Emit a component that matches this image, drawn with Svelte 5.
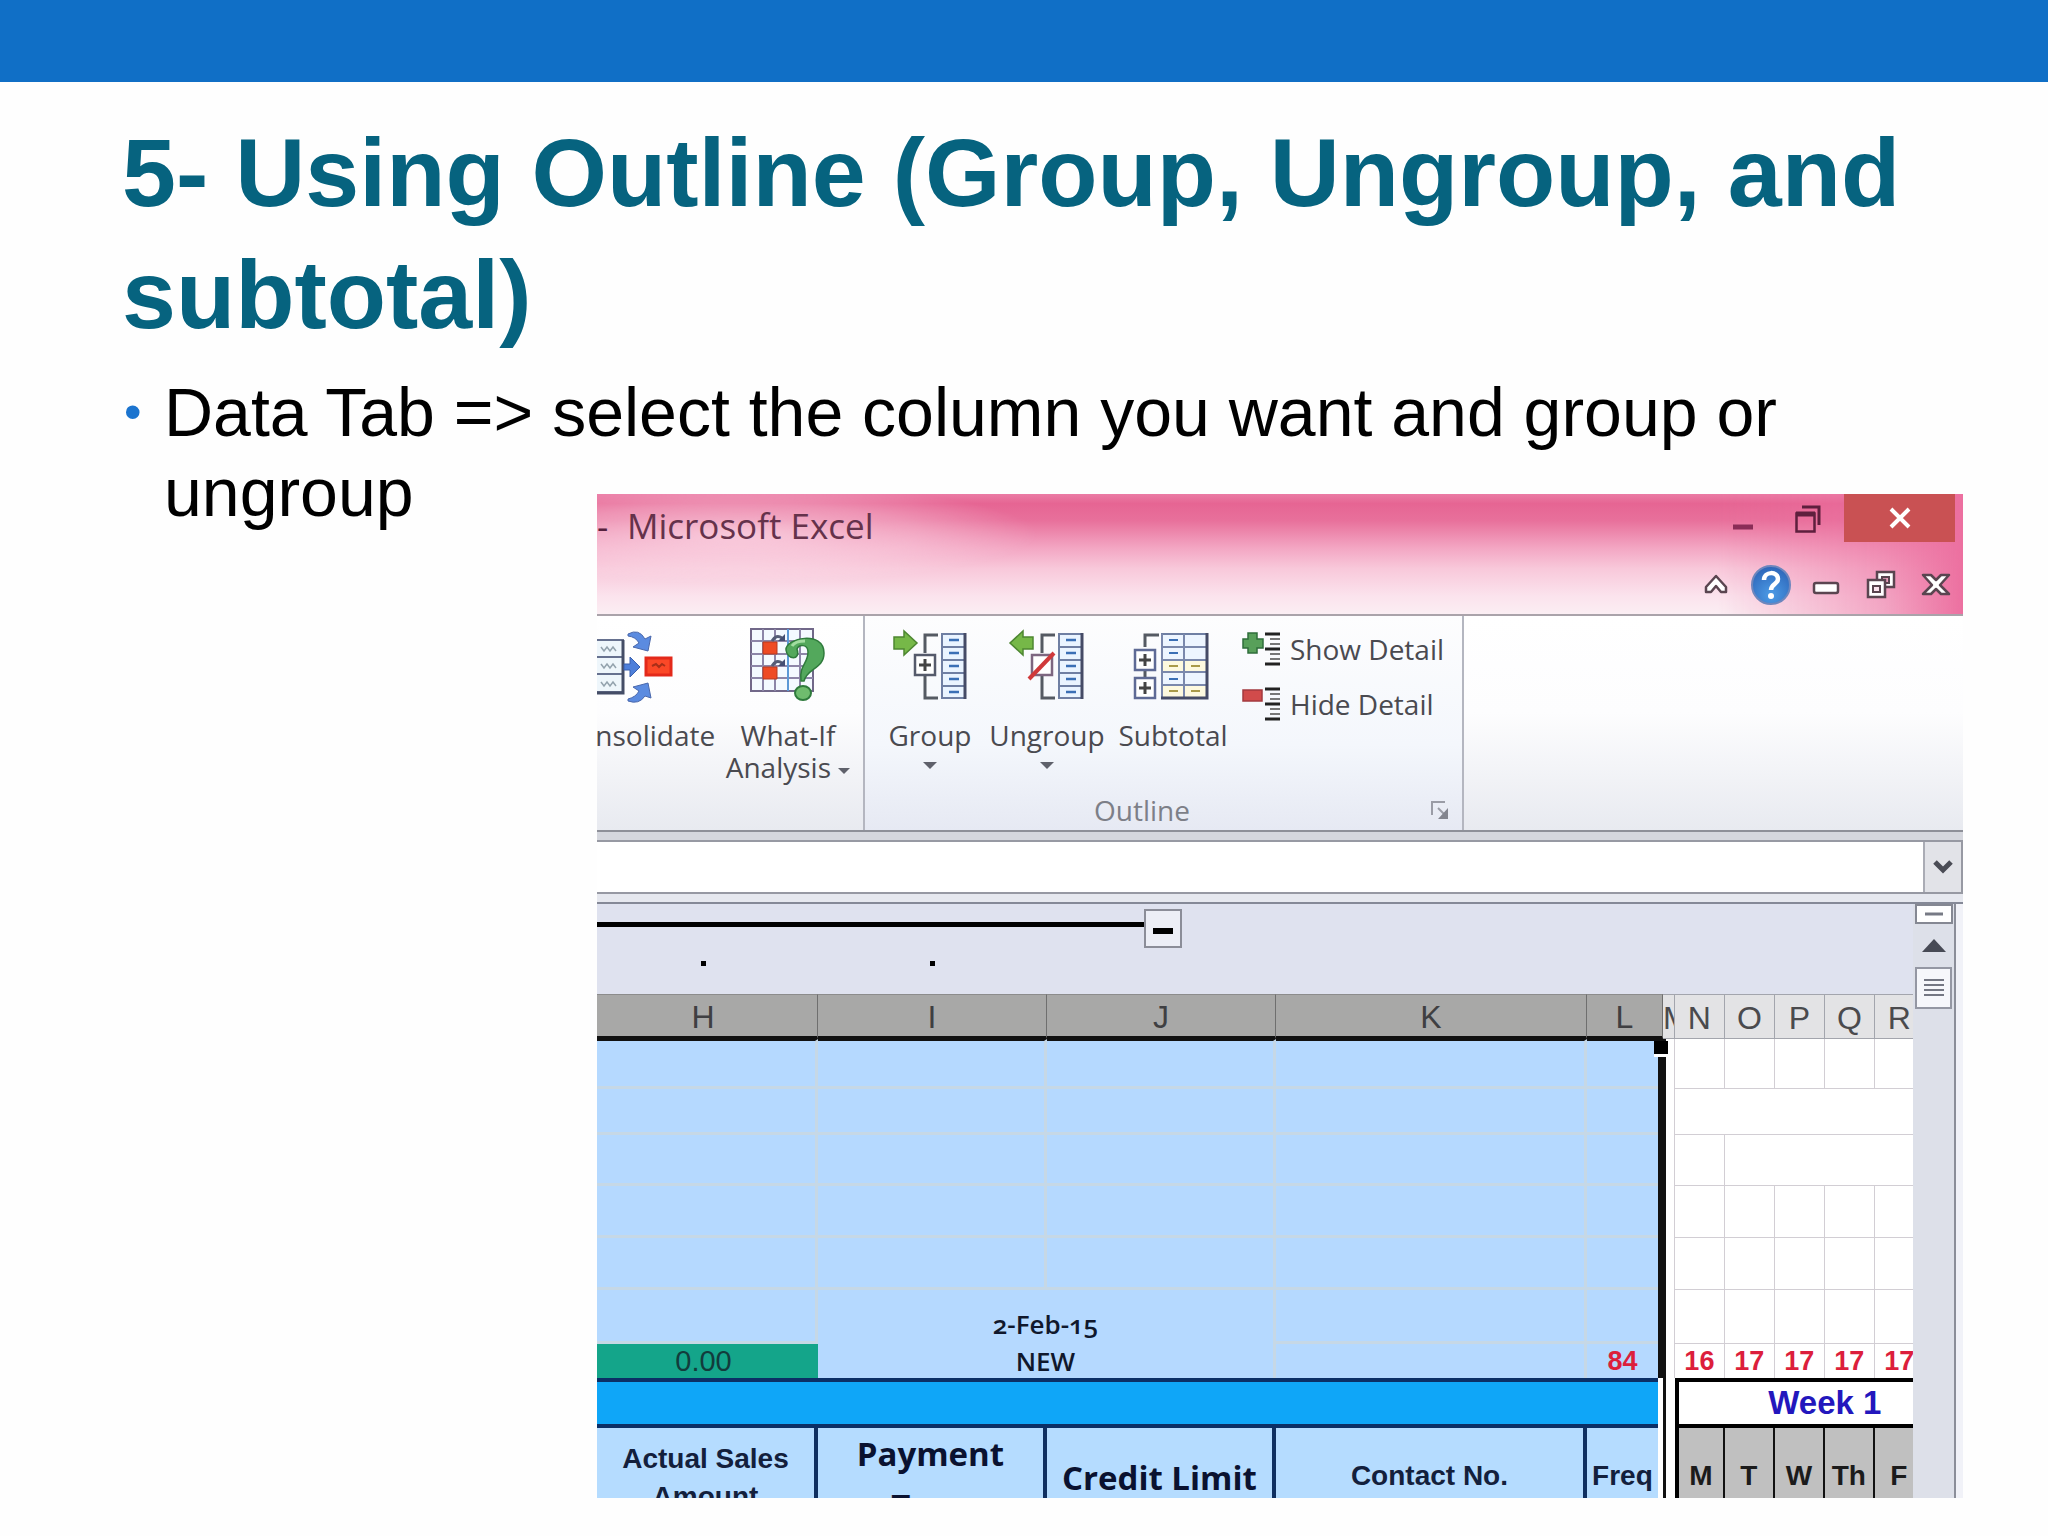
<script>
  const columns = [
    { name: 'H', size: 221 },
    { name: 'I', size: 229 },
    { name: 'J', size: 229 },
    { name: 'K', size: 311 },
    { name: 'L', size: 76 },
    { name: 'M', size: 12 },
    { name: 'N', size: 50 },
    { name: 'O', size: 50 },
    { name: 'P', size: 50 },
    { name: 'Q', size: 50 },
    { name: 'R', size: 50 },
    { name: 'S', size: 50 }
  ];
  const total = columns.reduce((sum, c) => sum + c.size, 0);
  const selected = ['H', 'I', 'J', 'K', 'L'];
  const weekCols = ['N', 'O', 'P', 'Q', 'R', 'S'];
  const days = ['M', 'T', 'W', 'Th', 'F', 'S'];
  const counts = ['16', '17', '17', '17', '17', '17'];
  const emptyRows = [
    { cls: 'r50', right: [1, 1, 1, 1, 1, 1] },
    { cls: 'r46', right: [6] },
    { cls: 'r51', right: [1, 5] },
    { cls: 'r52', right: [1, 1, 1, 1, 1, 1] },
    { cls: 'r52', right: [1, 1, 1, 1, 1, 1] }
  ];
  const bars = [0, 1, 2, 3, 4];
</script>

{#snippet cells(x)}
  <rect x={x} y="8" width="23" height="64" fill="#eaf4ff" stroke="#6f7fa3" stroke-width="2" />
  {#each bars as i}
    <path d="M{x} {8 + i * 13}h23" stroke="#6f7fa3" stroke-width="2" />
    <path d="M{x + 7} {14 + i * 13}h10" stroke="#3a6fb5" stroke-width="2.500" />
  {/each}
  <path d="M{x + 23} 7v66" stroke="#454b66" stroke-width="3" />
{/snippet}

{#snippet ruler()}
  <path d="M23 3h15M23 18h15M23 33h15" stroke="#222" stroke-width="3" />
  <path d="M28 8h10M28 13h10M28 23h10M28 28h10" stroke="#777" stroke-width="2" />
{/snippet}

<main class="slide">
  <div class="band"></div>
  <h1>5- Using Outline (Group, Ungroup, and subtotal)</h1>

  <div class="content">
    <ul>
      <li>Data Tab =&gt; select the column you want and group or ungroup</li>
    </ul>

    <section class="excel" aria-label="Microsoft Excel">
      <div class="titlebar">
        <div class="bar-top">
          <span class="dash">-</span>
          <span class="app-name">Microsoft Excel</span>
          <div class="window-buttons">
            <button class="w-min" aria-label="Minimize">
              <svg width="22" height="40" viewBox="0 0 22 40"><path d="M1 29h20" stroke="#8a2d57" stroke-width="5" /></svg>
            </button>
            <button class="w-max" aria-label="Restore">
              <svg width="28" height="40" viewBox="0 0 28 40"><path d="M8 9h17v18" fill="none" stroke="#5e1f3d" stroke-width="3" /><path d="M2.500 15.500h18v18h-18z" fill="none" stroke="#5e1f3d" stroke-width="2.500" /><path d="M2 16h19" stroke="#5e1f3d" stroke-width="5" /></svg>
            </button>
            <button class="w-close" aria-label="Close">
              <svg width="24" height="22" viewBox="0 0 24 22"><path d="M3 2l18 18M21 2L3 20" stroke="#fff" stroke-width="4" /></svg>
            </button>
          </div>
        </div>
        <div class="bar-bottom">
          <button aria-label="Collapse ribbon">
            <svg width="26" height="24" viewBox="0 0 26 24"><path d="M13 3L23 14v5h-5l-5-6-5 6H3v-5z" fill="#fff" stroke="#5a4550" stroke-width="2.500" stroke-linejoin="round" /></svg>
          </button>
          <button aria-label="Help">
            <svg width="42" height="42" viewBox="0 0 42 42">
              <defs><radialGradient id="help" cx=".5" cy=".75" r=".8"><stop offset="0" stop-color="#4b9be6" /><stop offset="1" stop-color="#2b61b5" /></radialGradient></defs>
              <circle cx="21" cy="21" r="19" fill="url(#help)" stroke="#6d86bd" stroke-width="2" />
              <path d="M14 16c0-9 14-9 14-1 0 5-7 5-7 11" fill="none" stroke="#fff" stroke-width="4.500" /><circle cx="21" cy="32" r="3" fill="#fff" />
            </svg>
          </button>
          <button aria-label="Minimize workbook">
            <svg width="28" height="28" viewBox="0 0 28 28"><rect x="2" y="12" width="24" height="10" rx="2" fill="#fff" stroke="#5a4550" stroke-width="2.500" /></svg>
          </button>
          <button aria-label="Restore workbook">
            <svg width="32" height="32" viewBox="0 0 32 32"><path d="M12 3h17v15H12z" fill="#fff" stroke="#5a4550" stroke-width="2.500" /><path d="M17 8h7v6h-7z" fill="#e99dbb" stroke="#5a4550" stroke-width="2" /><path d="M3 11h17v17H3z" fill="#fff" stroke="#5a4550" stroke-width="2.500" /><path d="M8 17h7v6H8z" fill="#fbe3ed" stroke="#5a4550" stroke-width="2" /></svg>
          </button>
          <button aria-label="Close workbook">
            <svg width="30" height="26" viewBox="0 0 30 26"><path d="M2 3h8l5 5 5-5h8l-9 10 9 9h-8l-5-5-5 5H2l9-9z" fill="#fff" stroke="#5a4550" stroke-width="2.500" stroke-linejoin="round" /></svg>
          </button>
        </div>
      </div>

      <div class="ribbon">
        <div class="group tools">
          <button class="tool consolidate">
            <svg width="84" height="80" viewBox="0 0 84 80">
              <rect x="-10" y="14" width="37" height="52" fill="#eef6fb" stroke="#66718f" stroke-width="2" />
              <path d="M-10 31h37M-10 48h37" stroke="#66718f" stroke-width="2" />
              <path d="M27 14v53H0" fill="none" stroke="#444d66" stroke-width="3" />
              <path d="M5 21l3 4 3-4 3 4 3-4 3 4M5 38l3 4 3-4 3 4 3-4 3 4M5 56l3 4 3-4 3 4 3-4 3 4" fill="none" stroke="#93a2ad" stroke-width="1.500" />
              <path d="M28 38h6v-7l10 10-10 10v-7h-6z" fill="#4d7fda" stroke="#385fae" />
              <path d="M32 8q11-6 17 5l6-3-3 15-15-4 6-4q-3-6-11-7z" fill="#5b8be0" stroke="#4a68ac" />
              <path d="M32 75q11 4 17-5l6 2-3-15-15 4 6 4q-3 6-11 8z" fill="#5b8be0" stroke="#4a68ac" />
              <rect x="50" y="32" width="25" height="17" fill="#fb4827" stroke="#e3291a" stroke-width="3" />
              <path d="M56 40l4-2 3 3 3-3 3 2" fill="none" stroke="#a92f18" stroke-width="2" />
            </svg>
            <span>Consolidate</span>
          </button>
          <button class="tool whatif">
            <svg width="84" height="80" viewBox="0 0 84 80">
              <rect x="5" y="3" width="62" height="62" fill="#f4faff" stroke="#716889" stroke-width="2" />
              <path d="M17 3v62M29 3v62M42 3v62M54 3v62M5 15h62M5 28h62M5 40h62M5 52h62" stroke="#8d86a8" stroke-width="2" />
              <path d="M42 3v62" stroke="#5c99d6" stroke-width="2" />
              <path d="M17 16h14v12H17zM17 41h14v12H17z" fill="#ee4b24" stroke="#b53b20" />
              <path d="M26 15q4-7 10-3M26 40q4-7 10-3" fill="none" stroke="#555d76" stroke-width="3" /><path d="M32 15h7V8zM32 40h7v-7z" fill="#454f73" />
              <path d="M40 24c-1-12 38-20 38 3 0 16-17 15-20 28h-3c-2-16 7-17 7-29 0-8-9-8-11-3 4 12-10 11-11 1z" fill="#53a85c" stroke="#2f7b3c" stroke-width="1.500" />
              <path d="M46 20q3-5 13-5" fill="none" stroke="#a2dca0" stroke-width="3" />
              <ellipse cx="57" cy="67" rx="8" ry="7" fill="#6fbc6e" stroke="#2f7b3c" stroke-width="2" />
            </svg>
            <span>What-If<br />Analysis <i class="caret"></i></span>
          </button>
        </div>

        <div class="group outline">
          <div class="outline-tools">
            <button class="tool t-group">
              <svg width="80" height="80" viewBox="0 0 80 80">
                <path d="M4 11h10V5l13 12-13 12v-6H4z" fill="#76b848" stroke="#4d8631" stroke-width="1.500" />
                <path d="M48 9H35v18M35 50v22h13" fill="none" stroke="#555a63" stroke-width="3" />
                <rect x="25" y="29" width="20" height="20" fill="#fff" stroke="#555a6b" stroke-width="2.500" /><path d="M29 39h12M35 33v12" stroke="#444" stroke-width="3" />
                {@render cells(52)}
              </svg>
              <span>Group</span><i class="caret"></i>
            </button>
            <button class="tool t-ungroup">
              <svg width="80" height="80" viewBox="0 0 80 80">
                <path d="M26 11H16V5L3 17l13 12v-6h10z" fill="#76b848" stroke="#4d8631" stroke-width="1.500" />
                <path d="M48 9H35v18M35 50v22h13" fill="none" stroke="#555a63" stroke-width="3" />
                <rect x="25" y="29" width="20" height="20" fill="#fff" stroke="#7d6680" stroke-width="2.500" /><path d="M22 53L47 27" stroke="#d0393a" stroke-width="4" />
                {@render cells(52)}
              </svg>
              <span>Ungroup</span><i class="caret"></i>
            </button>
            <button class="tool t-subtotal">
              <svg width="80" height="80" viewBox="0 0 80 80">
                <path d="M26 9H12v12M12 44v8" fill="none" stroke="#555a63" stroke-width="3" />
                <rect x="2" y="24" width="20" height="20" fill="#fff" stroke="#5e6a95" stroke-width="2.500" /><path d="M6 34h12M12 28v12" stroke="#444" stroke-width="3" />
                <rect x="2" y="52" width="20" height="20" fill="#fff" stroke="#5e6a95" stroke-width="2.500" /><path d="M6 62h12M12 56v12" stroke="#444" stroke-width="3" />
                <rect x="29" y="8" width="45" height="64" fill="#edf5ff" stroke="#6f7fa3" stroke-width="2" />
                <path d="M29 34h45v12H29zM29 59h45v13H29z" fill="#fdf9df" />
                <path d="M29 21h45M29 34h45M29 46h45M29 59h45M51 8v64M29 8v64" stroke="#7a88ac" stroke-width="2" />
                <path d="M36 14h9M36 27h9M36 53h9" stroke="#3a6fb5" stroke-width="2" /><path d="M36 40h9M58 40h9M36 65h9M58 65h9" stroke="#a99a49" stroke-width="2" />
                <path d="M74 7v65H28" fill="none" stroke="#454b66" stroke-width="3" />
              </svg>
              <span>Subtotal</span>
            </button>
            <div class="details">
              <button class="detail">
                <svg width="40" height="36" viewBox="0 0 40 36"><path d="M6 2h9v6h6v9h-6v5H6v-5H1V8h5z" fill="#58a05a" stroke="#2f6d3b" stroke-width="1.500" />{@render ruler()}</svg>
                Show Detail
              </button>
              <button class="detail">
                <svg width="40" height="36" viewBox="0 0 40 36"><rect x="1" y="4" width="19" height="11" fill="#d14b4b" stroke="#a33a3f" stroke-width="1.500" />{@render ruler()}</svg>
                Hide Detail
              </button>
            </div>
          </div>
          <div class="group-footer">
            <span>Outline</span>
            <button class="launcher" aria-label="Outline settings">
              <svg width="20" height="20" viewBox="0 0 20 20"><path d="M2 15V2h13" fill="none" stroke="#9a9ca6" stroke-width="2" /><path d="M8 8l7 7" stroke="#9a9ca6" stroke-width="2" /><path d="M18 8v11H8z" fill="#83858f" /></svg>
            </button>
          </div>
        </div>
      </div>

      <div class="strip"></div>
      <div class="formula">
        <input type="text" aria-label="Formula bar" />
        <button aria-label="Expand formula bar">
          <svg width="20" height="14" viewBox="0 0 20 14"><path d="M2 2l8 8 8-8" fill="none" stroke="#4a4c55" stroke-width="5" /></svg>
        </button>
      </div>
      <div class="strip low"></div>

      <div class="workbook">
        <div class="sheet">
          <div class="levels">
            <div class="bracket">
              <span class="rule"></span>
              <button aria-label="Collapse group"><svg width="20" height="6" viewBox="0 0 20 6"><path d="M0 3h20" stroke="#000" stroke-width="6" /></svg></button>
            </div>
            <div class="dots"><span></span><span></span></div>
          </div>
          <table>
            <colgroup>
              {#each columns as c}
                <col style:width="{(c.size / total) * 100}%" />
              {/each}
            </colgroup>
            <thead>
              <tr>
                {#each columns as c}
                  <th scope="col" class:sel={selected.includes(c.name)} class:partial={c.name === 'H'}><div class="letter">{c.name}</div></th>
                {/each}
              </tr>
            </thead>
            <tbody>
              {#each emptyRows as row, r}
                <tr class={row.cls}>
                  {#each selected as c}
                    <td class="blue" class:edge={c === 'L'} class:first={r === 0}>
                      {#if c === 'L' && r === 0}<span class="handle"></span>{/if}
                    </td>
                  {/each}
                  <td class="gap"></td>
                  {#each row.right as span}
                    <td class="plain" colspan={span}></td>
                  {/each}
                </tr>
              {/each}
              <tr class="r54">
                <td class="blue"></td>
                <td class="blue date" colspan="2">2-Feb-15</td>
                <td class="blue"></td>
                <td class="blue edge"></td>
                <td class="gap"></td>
                {#each weekCols as _}<td class="plain"></td>{/each}
              </tr>
              <tr class="r34">
                <td class="green partial">0.00</td>
                <td class="blue new" colspan="2">NEW</td>
                <td class="blue"></td>
                <td class="blue edge count">84</td>
                <td class="gap"></td>
                {#each counts as n}<td class="plain count">{n}</td>{/each}
              </tr>
              <tr class="r50">
                <td class="banner" colspan="5"><div class="fill"></div></td>
                <td class="gap thin"></td>
                <td class="week" colspan="6">Week 1</td>
              </tr>
              <tr class="heads">
                <td class="head"><div class="clip two">Actual Sales<br />Amount</div></td>
                <td class="head"><div class="clip pay">Payment<br />Type</div></td>
                <td class="head"><div class="clip credit">Credit Limit</div></td>
                <td class="head"><div class="clip one">Contact No.</div></td>
                <td class="head last"><div class="clip one">Freq</div></td>
                <td class="gap thin"></td>
                {#each days as d, i}<td class="day" class:start={i === 0}><div class="clip one">{d}</div></td>{/each}
              </tr>
            </tbody>
          </table>
        </div>
        <div class="scroll">
          <button class="split" aria-label="Split"><svg width="18" height="4" viewBox="0 0 18 4"><path d="M0 2h18" stroke="#777a85" stroke-width="3" /></svg></button>
          <button class="up" aria-label="Scroll up"><svg width="24" height="13" viewBox="0 0 24 13"><path d="M12 0l12 13H0z" fill="#474a55" /></svg></button>
          <button class="thumb" aria-label="Scroll thumb"><svg width="20" height="18" viewBox="0 0 20 18"><path d="M0 1h20M0 6h20M0 11h20M0 16h20" stroke="#747783" stroke-width="2" /></svg></button>
        </div>
        <div class="frame"></div>
      </div>
    </section>
  </div>
</main>

<style>
  :global(body) { background: #fefefe; }
  * { box-sizing: border-box; }
  button { border: 0; padding: 0; margin: 0; background: none; color: inherit; font: inherit; display: flex; align-items: center; justify-content: center; }
  svg { display: block; flex: none; }

  .slide { min-height: 100vh; font-family: "Liberation Sans", Arial, sans-serif; color: #000; }
  .band { height: 82px; background: #106fc6; }
  h1 { margin: 0; padding: 30px 120px 0 122px; font-size: 97px; line-height: 122px; font-weight: 700; color: #06637f; }

  .content { display: grid; padding-top: 16px; }
  .content > * { grid-area: 1 / 1; }
  ul { margin: 0; padding: 0 200px 0 124px; list-style: none; font-size: 68px; line-height: 80px; }
  li { display: flex; }
  li::before { content: "•"; flex: none; width: 40px; font-size: 50px; color: #1b74cf; }

  .excel { margin: 122px 4.15% 0 29.15%; min-width: 0; overflow: hidden; align-self: start; font-family: "Open Sans", "Noto Sans", sans-serif; font-size: 28px; color: #4a4a50; }

  .titlebar { height: 122px; border-bottom: 2px solid #aaa3aa; background: linear-gradient(90deg, rgba(236, 112, 160, 0) 82%, rgba(236, 112, 160, .55) 94%, #ec70a0 100%), radial-gradient(ellipse 300px 50px at 140px 40px, rgba(255, 240, 246, .6), rgba(255, 240, 246, .3) 60%, rgba(255, 240, 246, 0)), linear-gradient(#eb7ba5 0, #e66593 8%, #e8709b 22%, #f3a6c3 45%, #f8c8da 62%, #fbe3ed 85%, #fbeef3 100%); }
  .bar-top { display: flex; height: 56px; align-items: flex-start; padding-right: 8px; font-size: 35px; line-height: 64px; color: #55203c; }
  .dash { width: 30px; }
  .app-name { color: #65324b; }
  .window-buttons { display: flex; margin-left: auto; }
  .w-min { width: 58px; }
  .w-max { width: 72px; }
  .w-close { width: 111px; height: 48px; background: #c95153; }
  .bar-bottom { display: flex; justify-content: flex-end; height: 66px; }
  .bar-bottom button { width: 55px; height: 70px; }

  .ribbon { display: flex; height: 216px; background: linear-gradient(#fff 0, #fdfdfe 45%, #e8eaf0 100%); border-bottom: 2px solid #8e9099; }
  .group { border-right: 2px solid #b4b6c0; }
  .tools { display: flex; justify-content: flex-end; width: 268px; overflow: hidden; padding-top: 10px; }
  .tool { flex: none; flex-direction: column; justify-content: flex-start; line-height: 32px; text-align: center; }
  .tool svg { margin-bottom: 13px; }
  .consolidate { width: 150px; }
  .whatif { width: 150px; white-space: nowrap; }
  .caret { display: inline-block; border: 7px solid transparent; border-top-color: #5f616b; border-bottom: 0; vertical-align: middle; }
  .whatif .caret { border-width: 6px 6px 0; }
  .tool > .caret { margin-top: 11px; }
  .outline { display: flex; flex-direction: column; justify-content: space-between; width: 599px; padding: 10px 0 8px 10px; background: linear-gradient(#fdfdfe, #f4f7fc 60%, #e6e9f3); }
  .outline-tools { display: flex; align-items: flex-start; }
  .t-group { width: 110px; }
  .t-ungroup { width: 124px; }
  .t-subtotal { width: 128px; }
  .details { display: grid; gap: 19px; padding: 5px 0 0 5px; }
  .detail { gap: 8px; justify-content: flex-start; height: 36px; white-space: nowrap; }
  .group-footer { display: flex; justify-content: flex-end; align-items: center; gap: 240px; padding-right: 12px; line-height: 24px; color: #7d7f88; }

  .strip { height: 10px; background: #d5d7de; border-bottom: 2px solid #9799a3; }
  .strip.low { background: #e6e8ef; border-top: 2px solid #9799a3; border-bottom-color: #858997; height: 12px; }
  .formula { display: flex; height: 50px; padding-right: 2px; background: #9799a3; }
  input { flex: 1; min-width: 0; border: 0; padding: 0; background: #fff; }
  .formula button { width: 38px; background: #e2e3e8; border-left: 2px solid #aaacb5; }

  .workbook { display: flex; }
  .sheet { flex: 1; min-width: 0; overflow: hidden; background: #fff; }
  .levels { height: 90px; padding-top: 5px; background: #dfe2ef; }
  .bracket { display: grid; grid-template-columns: 547fr 38px 731fr; }
  .rule { height: 5px; margin-top: 13px; background: #000; }
  .bracket button { height: 39px; border: 2px solid #8b8d98; background: #eceef6; padding-top: 5px; }
  .dots { display: grid; grid-template-columns: 109fr 229fr 978fr; grid-template-rows: 5px; padding-top: 13px; }
  .dots span { justify-self: end; width: 5px; height: 5px; background: #000; }

  table { width: 104.7%; table-layout: fixed; border-collapse: separate; border-spacing: 0; font-family: "Liberation Sans", Arial, sans-serif; }
  th, td { padding: 0; text-align: center; vertical-align: middle; line-height: 32px; }
  th { height: 45px; font-size: 32px; font-weight: 400; color: #4a4a4d; background: #e3e3e5; border: solid #a3a5ad; border-width: 1px 1px 1px 0; }
  th.sel { background: #a8a8a7; border-color: #8c8c8c #6f6f6f #111; border-bottom-width: 3px; color: #3f3f42; }
  .letter { overflow: hidden; height: 40px; line-height: 42px; }
  .partial { padding-right: 8px; }

  .blue { background: #b5d9ff; border: solid #c6d8e6; border-width: 0 3px 3px 0; color: #10182c; }
  .blue.first { border-top: 2px solid #111; }
  .blue.edge { position: relative; border-right: 5px solid #111; border-bottom: 0; box-shadow: inset 0 -3px #c6d8e6; }
  .handle { position: absolute; top: 0; right: -10px; width: 14px; height: 16px; background: #000; border: 2px solid #fff; border-width: 0 0 3px 0; z-index: 1; }
  .gap { border-left: 3px solid #111; border-right: 1px solid #d2ced4; background: #fff; }
  .plain { border: solid #d2ced4; border-width: 0 1px 1px 0; background: #fff; }
  .r50 td { height: 50px; }
  .r46 td { height: 46px; }
  .r51 td { height: 51px; }
  .r52 td { height: 52px; }
  .r54 td { height: 54px; }
  .r34 td { height: 34px; border-bottom: 0; }
  .r34 .blue.edge { box-shadow: none; }
  .date, .new { font: 600 26px/32px "Open Sans", "Noto Sans", sans-serif; font-variant-numeric: oldstyle-nums; }
  .date { vertical-align: bottom; border-bottom: 0; padding-bottom: 4px; }
  .green { background: #14a58a; color: #123c3c; font-size: 29px; }
  .blue.count, .count { color: #dc1f3c; font-size: 27px; font-weight: 700; }
  .banner { background: #fff; }
  .fill { height: 50px; margin-right: 5px; background: #0fa6f8; border: solid #0b2f66; border-width: 4px 0; }
  .gap.thin { border-right-color: #fff; }
  .week { border: 4px solid #000; font-size: 33px; font-weight: 700; color: #2317bd; }
  .head { background: #b5dcff; border-right: 4px solid #0f2f60; color: #13203c; font-size: 28px; font-weight: 700; }
  .head.last { border-right: 5px solid #fff; }
  .day { background: #c0c0c0; border-right: 2px solid #111; color: #1b1b1b; font-size: 28px; font-weight: 700; }
  .day.start { border-left: 4px solid #000; }
  .clip { height: 70px; overflow: hidden; white-space: nowrap; }
  .two { padding-top: 12px; line-height: 38px; }
  .one { padding-top: 32px; }
  .pay { font: 700 33px/52px "Open Sans", "Noto Sans", sans-serif; color: #0a1230; }
  .credit { padding-top: 25px; font: 700 33px/50px "Open Sans", "Noto Sans", sans-serif; color: #0a1230; }

  .scroll { display: flex; flex-direction: column; align-items: center; width: 43px; background: #dde0e9; border-right: 2px solid #8b8e99; }
  .split { width: 38px; height: 20px; background: #fff; border: 2px solid #858893; }
  .up { height: 43px; }
  .thumb { width: 37px; height: 42px; background: #f6f7fb; border: 2px solid #9497a3; }
  .frame { width: 7px; background: #f1f2f8; }
</style>
